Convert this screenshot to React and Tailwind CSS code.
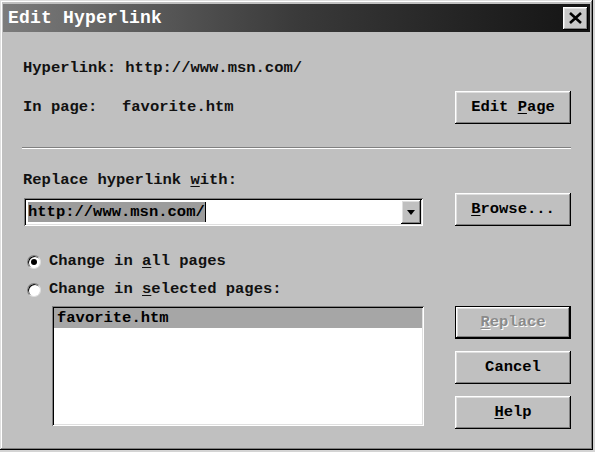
const FONT = "font-['Liberation_Mono','Courier_New',monospace]";

const RAISED =
  'shadow-[inset_-1px_-1px_#000,inset_1px_1px_#fff,inset_-2px_-2px_#808080,inset_2px_2px_#dfdfdf]';
const SUNKEN =
  'shadow-[inset_1px_1px_#808080,inset_-1px_-1px_#fff,inset_2px_2px_#000,inset_-2px_-2px_#dfdfdf]';

function U({ children }) {
  return <span className="underline underline-offset-2">{children}</span>;
}

function Button({ children, def, disabled, className = '' }) {
  return (
    <div className={`w-[116px] h-[33px] ${def ? 'border border-black' : ''} ${className}`}>
      <div className={`w-full h-full bg-[#c0c0c0] ${RAISED} flex items-center justify-center`}>
        <span
          className={
            disabled
              ? 'text-[#8a8a8a] [text-shadow:1px_1px_0_#fff]'
              : 'text-black'
          }
        >
          {children}
        </span>
      </div>
    </div>
  );
}

function Radio({ checked, children }) {
  return (
    <div className="flex items-center gap-[8px] h-[28px]">
      <span className="ml-[4px] w-[14px] h-[14px] rounded-full bg-white border border-[#808080] border-r-[#dfdfdf] border-b-[#dfdfdf] flex items-center justify-center shadow-[inset_1px_1px_#000]">
        {checked && <span className="w-[6px] h-[6px] rounded-full bg-black" />}
      </span>
      <span>{children}</span>
    </div>
  );
}

export default function App() {
  return (
    <div className={`w-[595px] h-[452px] bg-[#d4d4d4] ${FONT} text-[15.5px] font-bold text-[#111]`}>
      <div className="w-[593px] h-[450px] bg-[#c0c0c0] p-[3px] shadow-[inset_-1px_-1px_#000,inset_1px_1px_#dfdfdf,inset_-2px_-2px_#808080,inset_2px_2px_#fff] flex flex-col">
        {/* title bar */}
        <div className="mt-[1px] h-[28px] bg-gradient-to-r from-[#7c7c7c] via-[#3a3a3a] to-[#141414] flex items-center justify-between pl-[5px] pr-[2px]">
          <span className="text-white text-[18px] font-bold tracking-[0.2px]">Edit Hyperlink</span>
          <div className={`w-[25px] h-[23px] bg-[#c8c8c8] ${RAISED} flex items-center justify-center`}>
            <svg width="13" height="12" viewBox="0 0 13 12">
              <path d="M1 1 L12 11 M12 1 L1 11" stroke="#000" strokeWidth="2.6" />
            </svg>
          </div>
        </div>

        <div className="flex-1 pl-[20px] pr-[19px] flex flex-col">
          <div className="mt-[26px] h-[20px] leading-[20px]">Hyperlink: http://www.msn.com/</div>

          <div className="mt-[13px] flex items-center justify-between">
            <div className="flex">
              <span className="w-[99px]">In page:</span>
              <span>favorite.htm</span>
            </div>
            <Button>
              Edit <U>P</U>age
            </Button>
          </div>

          <div className="mt-[23px] h-[2px] ml-[-1px] border-t border-[#808080] border-b border-b-white" />

          <div className="mt-[21px] h-[20px] leading-[20px]">
            Replace hyperlink <U>w</U>ith:
          </div>

          <div className="mt-[3px] flex items-end justify-between">
            <div className={`ml-[1px] w-[399px] h-[28px] bg-white ${SUNKEN} p-[2px] flex`}>
              <div className="flex-1 flex items-center pl-[2px]">
                <span className="bg-[#9c9c9c] text-black leading-[20px]">http://www.msn.com/</span>
                <span className="w-[1px] h-[20px] bg-black" />
              </div>
              <div className={`w-[20px] h-full bg-[#c0c0c0] ${RAISED} flex items-center justify-center`}>
                <svg width="8" height="5" viewBox="0 0 8 5">
                  <path d="M0 0 H8 L4 5 Z" fill="#000" />
                </svg>
              </div>
            </div>
            <Button>
              <U>B</U>rowse...
            </Button>
          </div>

          <div className="mt-[22px]">
            <Radio checked>
              Change in <U>a</U>ll pages
            </Radio>
            <Radio>
              Change in <U>s</U>elected pages:
            </Radio>
          </div>

          <div className="mt-[2px] flex justify-between">
            <div className={`ml-[29px] w-[372px] h-[120px] bg-white ${SUNKEN} p-[2px]`}>
              <div className="h-[20px] bg-[#a6a6a6] text-black leading-[20px] pl-[3px]">favorite.htm</div>
            </div>
            <div className="flex flex-col gap-[12px]">
              <Button def disabled>
                <U>R</U>eplace
              </Button>
              <Button>Cancel</Button>
              <Button>
                <U>H</U>elp
              </Button>
            </div>
          </div>
        </div>
      </div>
    </div>
  );
}
